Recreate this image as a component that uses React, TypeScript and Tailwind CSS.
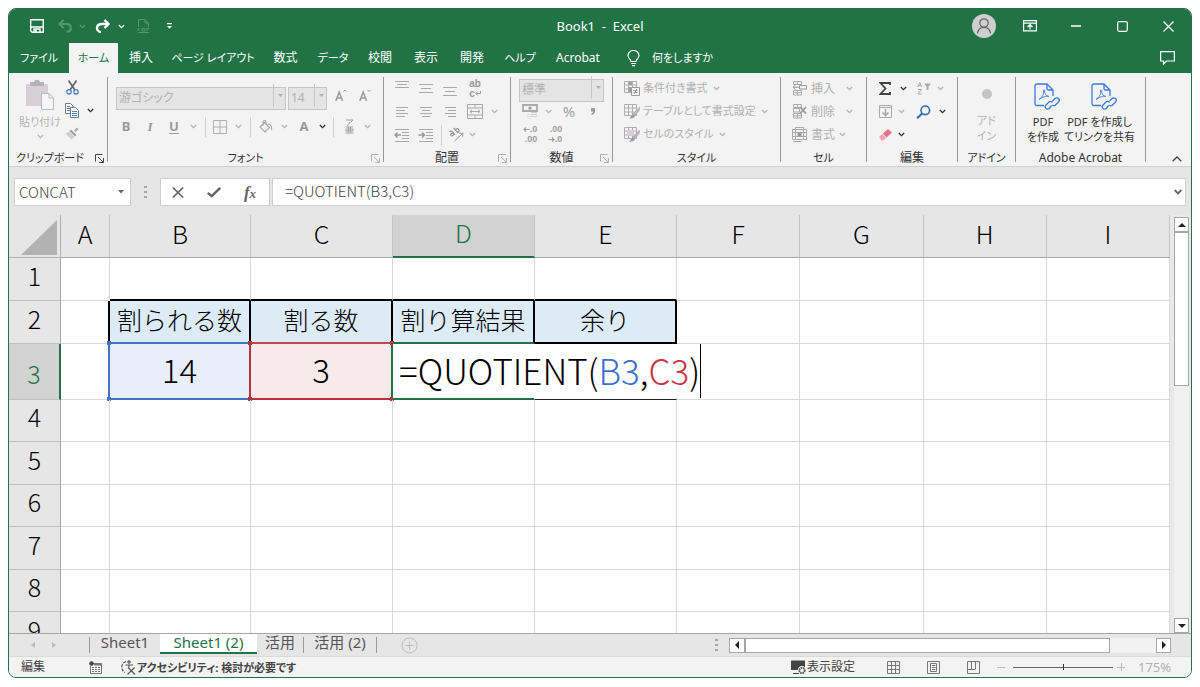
import React from 'react';

const UI = "font-['Noto_Sans','Noto_Sans_CJK_JP',sans-serif] [font-feature-settings:'palt']";
const CELL = "font-['Noto_Sans_CJK_JP',sans-serif] [font-feature-settings:normal]";

/* ---------- small shared pieces ---------- */

function Chevron({ className = 'text-[#b4b4b4]' }: { className?: string }) {
    return (
        <svg width="7" height="5" viewBox="0 0 7 5" className={`${className} shrink-0`} fill="none" stroke="currentColor" strokeWidth="1.3">
            <path d="M0.8 1 L3.5 3.7 L6.2 1" />
        </svg>
    );
}

function Drop({ width = 'w-4', dark = false, label }: { width?: string; dark?: boolean; label: string }) {
    return (
        <button aria-label={label} className={`${width} h-5 flex items-center justify-center shrink-0`}>
            <Chevron className={dark ? 'text-[#333]' : 'text-[#b4b4b4]'} />
        </button>
    );
}

function Tool({ width = 'w-6', label, className = '', children }: { width?: string; label: string; className?: string; children: React.ReactNode }) {
    return (
        <button aria-label={label} className={`${width} h-[23px] flex items-center justify-center shrink-0 ${className}`}>
            {children}
        </button>
    );
}

/* Horizontal strokes for the alignment icons: [x1, x2, y] */
function Lines({ rows, children }: { rows: number[][]; children?: React.ReactNode }) {
    return (
        <svg width="18" height="22" viewBox="0 0 18 22" stroke="#a8a8a8" fill="none">
            {rows.map(([x1, x2, y], i) => (
                <path key={i} d={`M${x1} ${y}.5 H${x2}`} />
            ))}
            {children}
        </svg>
    );
}

function Launcher({ dark = false }: { dark?: boolean }) {
    return (
        <button aria-label="詳細" className={`absolute right-[3px] top-[4px] ${dark ? 'text-[#444]' : 'text-[#b0b0b0]'}`}>
            <svg width="9" height="9" viewBox="0 0 9 9" fill="none" stroke="currentColor">
                <path d="M0.5 7.5 V0.5 H7.5 M3 3 L8 8 M8.5 4 V8.5 H4" />
            </svg>
        </button>
    );
}

type GroupProps = { label: string; width: string; size?: string; launcher?: 'dark' | 'light'; children: React.ReactNode };

function Group({ label, width, size = 'text-xs', launcher, children }: GroupProps) {
    return (
        <section aria-label={label} className={`${width} relative flex shrink-0`}>
            <div className="flex-1 min-w-0 flex flex-col">
                <div className="flex-1">{children}</div>
                <div className={`relative h-4 text-center ${size} leading-4 text-[#333] whitespace-nowrap`}>
                    <span className={launcher === 'dark' ? 'pr-4' : ''}>{label}</span>
                    {launcher && <Launcher dark={launcher === 'dark'} />}
                </div>
            </div>
            <div className="w-px my-1 bg-[#979797]" />
        </section>
    );
}

function Sep() {
    return <div className="w-px h-5 bg-[#d0d0d0] shrink-0" />;
}

function RibbonSelect({ label, value, width }: { label: string; value: string; width: string }) {
    return (
        <div className={`${width} relative h-[23px] text-[#b0b0b0]`}>
            <select aria-label={label} className="appearance-none w-full h-full bg-[#e4e4e4] border border-[#c6c6c6] pl-[2px] text-xs leading-5 outline-none">
                <option>{value}</option>
            </select>
            <span className="pointer-events-none absolute right-0 inset-y-0 w-[13px] border-l border-[#c6c6c6] flex items-center justify-center">
                <svg width="5" height="3" viewBox="0 0 5 3"><path d="M0 0 H5 L2.5 3 Z" fill="#b0b0b0" /></svg>
            </span>
        </div>
    );
}

/* ---------- title bar ---------- */

function TitleBar() {
    return (
        <header className="h-[34px] shrink-0 relative flex items-center justify-between text-white">
            <div className="flex items-center pl-[18px]">
                <Tool label="上書き保存" width="w-5">
                    <svg width="14" height="14" viewBox="0 0 14 14" fill="none" stroke="currentColor" strokeWidth="1.4">
                        <path d="M0.7 0.7 H13.3 V13.3 H2.2 L0.7 12 Z" />
                        <path d="M1 8 H13" strokeWidth="1.4" />
                        <path d="M4 13 V10 H10 V13" />
                        <path d="M5.8 10.5 V13" strokeWidth="2" />
                    </svg>
                </Tool>
                <Tool label="元に戻す" width="w-7" className="ml-1 text-[#569772]">
                    <svg width="14" height="14" viewBox="0 0 14 14" fill="none" stroke="currentColor" strokeWidth="2">
                        <path d="M5.5 1 L1.5 5 L5.5 9" />
                        <path d="M2 5 H8.5 C14 5 14.5 12.5 8.5 12.8" />
                    </svg>
                </Tool>
                <Chevron className="text-[#569772]" />
                <Tool label="やり直し" width="w-8">
                    <svg width="15" height="14" viewBox="0 0 15 14" fill="none" stroke="currentColor" strokeWidth="2.4">
                        <path d="M9.5 1 L13.5 5 L9.5 9" />
                        <path d="M13 5 H7 C0.5 5 0.5 12.5 6 13" />
                    </svg>
                </Tool>
                <Chevron className="text-white" />
                <Tool label="PDF" width="w-9" className="text-[#569772]">
                    <svg width="13" height="15" viewBox="0 0 13 15" fill="none" stroke="currentColor">
                        <path d="M1.5 8 V0.5 H8 L11.5 4 V8 M8 0.5 V4 H11.5" />
                        <path d="M1.5 14 V13.5 H11.5 V14" />
                        <path d="M1 9.5 V12 M1 10 H3 M5 9.5 H8 V12 H5 Z M10 9.5 H12.5 M10 9.5 V12" />
                    </svg>
                </Tool>
                <Tool label="カスタマイズ" width="w-4">
                    <svg width="5" height="6" viewBox="0 0 5 6" fill="currentColor">
                        <path d="M0 0 H5 V1.2 H0 Z M0 3 H5 L2.5 5.8 Z" />
                    </svg>
                </Tool>
            </div>
            <h1 className="absolute inset-x-0 text-center text-[13px] leading-5 pointer-events-none whitespace-pre">Book1  -  Excel</h1>
            <div className="flex items-center">
                <button aria-label="アカウント" className="size-6 rounded-full bg-[#cfcfcf] flex items-center justify-center mr-[22px]">
                    <svg width="16" height="18" viewBox="0 0 16 18" fill="none" stroke="#666" strokeWidth="1.2">
                        <circle cx="8" cy="6" r="4.2" />
                        <path d="M1.5 16.5 C2 12 5 10.3 8 10.3 C11 10.3 14 12 14.5 16.5" />
                    </svg>
                </button>
                <Tool label="リボンの表示オプション" className="mr-[22px]">
                    <svg width="14" height="12" viewBox="0 0 14 12" fill="none" stroke="currentColor" strokeWidth="1.2">
                        <path d="M0.6 0.6 H13.4 V10.9 H0.6 Z M0.6 3.2 H13.4 M7 9.5 V5 M4.5 7 L7 4.6 L9.5 7" />
                    </svg>
                </Tool>
                <Tool label="最小化" className="mr-[22px]">
                    <svg width="10" height="2" viewBox="0 0 10 2"><path d="M0 1 H10" stroke="currentColor" strokeWidth="1.3" /></svg>
                </Tool>
                <Tool label="最大化" className="mr-[22px]">
                    <svg width="11" height="11" viewBox="0 0 11 11" fill="none" stroke="currentColor" strokeWidth="1.2"><rect x="0.7" y="0.7" width="9.6" height="9.6" rx="1.5" /></svg>
                </Tool>
                <Tool label="閉じる" className="mr-[11px]">
                    <svg width="11" height="11" viewBox="0 0 11 11" stroke="currentColor" strokeWidth="1.3"><path d="M0.5 0.5 L10.5 10.5 M10.5 0.5 L0.5 10.5" /></svg>
                </Tool>
            </div>
        </header>
    );
}

const TABS: [string, string][] = [
    ['ファイル', 'w-[60px] text-[11px]'],
    ['ホーム', 'w-[49px] text-[11px] bg-[#f3f3f3] text-[#217346]'],
    ['挿入', 'w-[46px]'],
    ['ページ レイアウト', 'w-[98px] text-[11px]'],
    ['数式', 'w-[47px]'],
    ['データ', 'w-[48px] text-[11px]'],
    ['校閲', 'w-[46px]'],
    ['表示', 'w-[46px]'],
    ['開発', 'w-[46px]'],
    ['ヘルプ', 'w-[50px] text-[11px]'],
    ['Acrobat', 'w-[66px]'],
];

function RibbonTabs() {
    return (
        <nav className="h-[30px] shrink-0 flex text-xs text-white">
            {TABS.map(([name, cls]) => (
                <button key={name} className={`${cls} h-full shrink-0 flex items-center justify-center whitespace-nowrap`}>{name}</button>
            ))}
            <button className="flex items-center gap-3 pl-4 text-[11px] whitespace-nowrap">
                <svg width="13" height="17" viewBox="0 0 13 17" fill="none" stroke="currentColor" strokeWidth="1.2">
                    <path d="M4 11.5 C4 9 1 8.5 1 5.5 A5.5 5 0 0 1 12 5.5 C12 8.5 9 9 9 11.5 Z M4.2 13.5 H8.8 M5 15.7 H8" />
                </svg>
                何をしますか
            </button>
            <button aria-label="コメント" className="ml-auto mr-4">
                <svg width="15" height="14" viewBox="0 0 15 14" fill="none" stroke="currentColor" strokeWidth="1.2">
                    <path d="M0.6 0.6 H14.4 V10 H6.5 L3.5 13 V10 H0.6 Z" />
                </svg>
            </button>
        </nav>
    );
}

/* ---------- ribbon groups ---------- */

function Clipboard() {
    return (
        <Group label="クリップボード" width="w-[99px]" size="text-[11px]" launcher="dark">
            <div className="flex pt-[3px] pl-[9px]">
                <button className="w-11 pt-[3px] flex flex-col items-center text-[11px] leading-4 text-[#b4b4b4] whitespace-nowrap">
                    <svg width="28" height="32" viewBox="0 0 28 32" className="mb-[3px]">
                        <path d="M0 5 H22 V27 H0 Z" fill="#d6d0d6" />
                        <path d="M4 3 H8 C8 0 14 0 14 3 H18 V7 H4 Z" fill="#b5b3b5" />
                        <path d="M15.5 14.5 H23 L27.5 19 V30.5 H15.5 Z" fill="#f6f6f6" stroke="#bdb8bd" />
                        <path d="M23 14.5 V19 H27.5" fill="none" stroke="#bdb8bd" />
                    </svg>
                    貼り付け
                    <span className="pt-1"><Chevron /></span>
                </button>
                <div className="flex flex-col">
                    <Tool label="切り取り" width="w-5">
                        <svg width="13" height="15" viewBox="0 0 13 15" fill="none">
                            <path d="M2.5 0.5 L9 10 M10.5 0.5 L4 10" stroke="#666" strokeWidth="1.7" />
                            <circle cx="3" cy="11.8" r="2.2" stroke="#4f81bd" strokeWidth="1.3" />
                            <circle cx="10" cy="11.8" r="2.2" stroke="#4f81bd" strokeWidth="1.3" />
                        </svg>
                    </Tool>
                    <div className="flex items-center">
                        <Tool label="コピー" width="w-5">
                            <svg width="14" height="15" viewBox="0 0 14 15" fill="#f8f8f8" stroke="#6b7a8c">
                                <path d="M0.5 0.5 H5.5 L8 3 V10.5 H0.5 Z M2 3.5 H5 M2 5.5 H5 M2 7.5 H5" />
                                <path d="M5.5 4.5 H10.5 L13.5 7.5 V14.5 H5.5 Z" />
                                <path d="M7 8.5 H12 M7 10.5 H12 M7 12.5 H12" stroke="#4f81bd" />
                            </svg>
                        </Tool>
                        <Drop label="コピーのオプション" dark />
                    </div>
                    <Tool label="書式のコピー" width="w-5">
                        <svg width="14" height="13" viewBox="0 0 14 13">
                            <path d="M9 3.5 L12 0.5 L13.5 2 L10.5 5 Z" fill="#aaa" />
                            <path d="M6 2.5 L11.5 8 L10 9.5 L4.5 4 Z" fill="#a0a0a0" />
                            <path d="M4 4.5 L9.5 10 L6.5 12.5 L0.5 6.5 Z" fill="#cfcfcf" />
                        </svg>
                    </Tool>
                </div>
            </div>
        </Group>
    );
}

function FontGroup() {
    return (
        <Group label="フォント" width="w-[276px]" size="text-[11px]" launcher="light">
            <div className="flex items-center pl-2 pt-[11px] text-[#999]">
                <RibbonSelect label="フォント名" value="游ゴシック" width="w-[170px]" />
                <div className="w-[2px]" />
                <RibbonSelect label="フォント サイズ" value="14" width="w-[39px]" />
                <Tool label="フォント サイズの拡大" className="ml-[2px]">
                    <svg width="12" height="14" viewBox="0 0 12 14" fill="none" stroke="currentColor" strokeWidth="1.5"><path d="M0.8 12 L4.2 3 L7.6 12 M2 9 H6.5" /><path d="M8.5 2.6 L10 1 L11.5 2.6" strokeWidth="1" /></svg>
                </Tool>
                <Tool label="フォント サイズの縮小">
                    <svg width="12" height="14" viewBox="0 0 12 14" fill="none" stroke="currentColor" strokeWidth="1.5"><path d="M0.8 12 L4.2 3 L7.6 12 M2 9 H6.5" /><path d="M8.5 1 L10 2.6 L11.5 1" strokeWidth="1" /></svg>
                </Tool>
            </div>
            <div className="flex items-center pl-[6px] pt-2 text-[#9a9a9a] text-[13px]">
                <Tool label="太字" className="font-bold">B</Tool>
                <Tool label="斜体" className="font-bold italic font-['Liberation_Serif',serif]">I</Tool>
                <Tool label="下線" className="font-bold underline underline-offset-2">U</Tool>
                <Drop width="w-[14px]" label="下線の種類" />
                <div className="px-[5px]"><Sep /></div>
                <Tool label="罫線" width="w-[18px]">
                    <svg width="14" height="14" viewBox="0 0 14 14" fill="none" stroke="#b0b0b0"><path d="M0.5 0.5 H13.5 V13.5 H0.5 Z M7 0.5 V13.5 M0.5 7 H13.5" /></svg>
                </Tool>
                <Drop width="w-[18px]" label="罫線の種類" />
                <div className="px-[3px]"><Sep /></div>
                <Tool label="塗りつぶしの色">
                    <svg width="14" height="13" viewBox="0 0 14 13" fill="none" stroke="#a8a8a8" strokeWidth="1.1"><path d="M5.5 2.5 L10.5 7.5 L6 12 L1 7 Z M4 6 V2 A1.5 1.5 0 0 1 7 2 V5 M9 4 C12 4.5 13 7 12.5 10" /></svg>
                </Tool>
                <Drop width="w-3" label="塗りつぶしの色の選択" />
                <div className="w-[2px]" />
                <Tool label="フォントの色" className="font-bold">A</Tool>
                <Drop width="w-3" dark label="フォントの色の選択" />
                <div className="px-[5px]"><Sep /></div>
                <Tool label="ふりがな" width="w-5">
                    <svg width="9" height="15" viewBox="0 0 9 15" fill="none" stroke="#a0a0a0"><path d="M1 1 H8 L5.5 3.5 M4.5 3 C4.5 5 3.5 6 2 6.5 M1 8 H8 M3.5 8 V13.5 M5.5 8 V13.5 M1 10 V12 H8 V10 H1 M0.5 14 H8.5" /></svg>
                </Tool>
                <Drop label="ふりがなの設定" />
            </div>
        </Group>
    );
}

function Alignment() {
    return (
        <Group label="配置" width="w-[127px]" launcher="light">
            <div className="pt-1 pl-[6px]">
                <div className="flex items-center h-[23px]">
                    <Tool label="上揃え"><Lines rows={[[2, 16, 3], [4, 14, 6], [2, 16, 9]]} /></Tool>
                    <Tool label="上下中央揃え"><Lines rows={[[2, 16, 6], [4, 14, 10], [2, 16, 14]]} /></Tool>
                    <Tool label="下揃え"><Lines rows={[[2, 16, 9], [4, 14, 13], [2, 16, 17]]} /></Tool>
                    <Tool label="折り返して全体を表示する" width="w-[26px]" className="text-[#9a9a9a]">
                        <span className="text-[10px] leading-[10px] font-bold text-left font-['Liberation_Sans',sans-serif]">
                            <span className="block h-[10px]">ab</span>
                            <span className="flex items-center h-[10px]">
                                c
                                <svg width="6" height="5" viewBox="0 0 6 5" fill="none" stroke="currentColor"><path d="M5.5 0 V2.5 H1 M2.5 0.7 L0.8 2.5 L2.5 4.3" /></svg>
                            </span>
                        </span>
                    </Tool>
                </div>
                <div className="flex items-center h-[23px]">
                    <Tool label="左揃え"><Lines rows={[[3, 15, 6], [3, 12, 9], [3, 15, 12], [3, 12, 15]]} /></Tool>
                    <Tool label="中央揃え"><Lines rows={[[3, 15, 6], [5, 13, 9], [3, 15, 12], [5, 13, 15]]} /></Tool>
                    <Tool label="右揃え"><Lines rows={[[4, 15, 6], [7, 15, 9], [4, 15, 12], [7, 15, 15]]} /></Tool>
                    <Tool label="セルを結合して中央揃え" width="w-[26px]">
                        <svg width="16" height="15" viewBox="0 0 16 15" fill="none" stroke="#a8a8a8"><path d="M0.5 0.5 H15.5 V14.5 H0.5 Z M0.5 4 H15.5 M0.5 11 H15.5 M8 0.5 V4 M8 11 V14.5 M3 7.5 H13 M5 5.7 L3 7.5 L5 9.3 M11 5.7 L13 7.5 L11 9.3" /></svg>
                    </Tool>
                    <Drop width="w-3" label="結合の種類" />
                </div>
                <div className="flex items-center h-[23px]">
                    <Tool label="インデントを減らす">
                        <Lines rows={[[2, 16, 5], [9, 16, 8], [9, 16, 11], [9, 16, 14], [2, 16, 17]]}><path d="M2 11 H8 M4.5 8.5 L2 11 L4.5 13.5" strokeWidth="1.5" stroke="#999" /></Lines>
                    </Tool>
                    <Tool label="インデントを増やす">
                        <Lines rows={[[2, 16, 5], [9, 16, 8], [9, 16, 11], [9, 16, 14], [2, 16, 17]]}><path d="M1.5 11 H7.5 M5 8.5 L7.5 11 L5 13.5" strokeWidth="1.5" stroke="#999" /></Lines>
                    </Tool>
                    <div className="pl-[3px]"><Sep /></div>
                    <Tool label="方向" width="w-[28px]" className="text-[#999]">
                        <svg width="16" height="15" viewBox="0 0 16 15" fill="none" stroke="currentColor">
                            <path d="M1.5 5.2 C2.5 3.8 3.8 4 4.6 5 L7 7.8 M5.2 5.8 C3.8 5.8 2 7 2.8 8.4 C3.8 9.8 6 8 5.8 6.6" strokeWidth="1.2" />
                            <path d="M5.5 0.8 L10 6 M7.6 3.2 C8 1.4 10 1.2 10.8 2.6 C11.6 4 10.8 5.6 9.4 5.4" strokeWidth="1.2" />
                            <path d="M6.5 14 L14.5 6.5 M11.2 6.2 H14.8 V9.8" />
                        </svg>
                    </Tool>
                    <Drop width="w-1" label="方向の設定" />
                </div>
            </div>
        </Group>
    );
}

function NumberGroup() {
    return (
        <Group label="数値" width="w-[102px]" launcher="light">
            <div className="pt-[3px] pl-2">
                <RibbonSelect label="表示形式" value="標準" width="w-[85px]" />
                <div className="flex items-center h-6 text-[#a0a0a0]">
                    <Tool label="通貨表示形式" width="w-[22px]">
                        <svg width="16" height="15" viewBox="0 0 16 15" fill="none"><path d="M1 1 H15 V7 H1 Z" stroke="#aaa" strokeWidth="1.8" /><circle cx="8" cy="4" r="1.6" fill="#999" /><path d="M9 8.5 H15 M9 10.5 H15 M9 12.5 H15" stroke="#ccc" /><path d="M5 10.5 H9 M5 12.5 H9 M5 14.5 H9" stroke="#ddd" /></svg>
                    </Tool>
                    <Drop width="w-[14px]" label="通貨の選択" />
                    <Tool label="パーセント スタイル" width="w-[28px]" className="text-[15px]">%</Tool>
                    <Tool label="桁区切りスタイル" width="w-5">
                        <svg width="4" height="7" viewBox="0 0 4 7"><path d="M0 0 H4 V3 C4 5.5 2.5 6.5 0.5 7 V5.5 C1.5 5.2 2 4.5 2 3.6 H0 Z" fill="#999" /></svg>
                    </Tool>
                </div>
                <div className="flex items-center h-[22px] text-[9px] leading-[10px] font-bold text-[#a0a0a0] font-['Liberation_Sans',sans-serif]">
                    <Tool label="小数点以下の表示桁数を増やす" width="w-[22px]">
                        <span>
                            <span className="flex items-center justify-end h-[10px]">
                                <svg width="7" height="5" viewBox="0 0 7 5" fill="none" stroke="currentColor" strokeWidth="1.2"><path d="M6.5 2.5 H1 M3 0.5 L1 2.5 L3 4.5" /></svg>.0
                            </span>
                            <span className="block text-right h-[10px]">.00</span>
                        </span>
                    </Tool>
                    <Tool label="小数点以下の表示桁数を減らす" width="w-[28px]">
                        <span>
                            <span className="block text-right h-[10px]">.00</span>
                            <span className="flex items-center justify-end h-[10px]">
                                <svg width="7" height="5" viewBox="0 0 7 5" fill="none" stroke="currentColor" strokeWidth="1.2"><path d="M0.5 2.5 H6 M4 0.5 L6 2.5 L4 4.5" /></svg>.0
                            </span>
                        </span>
                    </Tool>
                </div>
            </div>
        </Group>
    );
}

function StyleIcon({ kind }: { kind: number }) {
    return (
        <svg width="16" height="15" viewBox="0 0 16 15" fill="none" stroke="#aeaeae">
            <path d="M0.5 0.5 H12.5 V11.5 H0.5 Z M4.5 0.5 V11.5 M8.5 0.5 V11.5 M0.5 4 H12.5 M0.5 8 H12.5" />
            {kind === 0 && <path d="M4.5 1 H8 V4 H4.5 Z M4.5 6 H7 V11 H4.5 Z" fill="#a0a0a0" stroke="none" />}
            {kind === 0 && <path d="M7.5 6.5 H15.5 V14.5 H7.5 Z M9.5 9.5 H13.5 M9.5 11.5 H13.5 M13 8 L10 13" fill="#f3f3f3" stroke="#9a9a9a" />}
            {kind === 2 && <path d="M3 3 H10 V9 H3 Z" fill="#d9ccd6" stroke="none" />}
            {kind > 0 && <path d="M15.5 3 L9 10 L11 12 L15.5 6 Z" fill="#b8b8b8" stroke="#a5a5a5" strokeWidth="0.5" />}
            {kind > 0 && <path d="M9 10 L11 12 C10 14.5 7.5 14.5 5 14.5 C7 13.5 7 11 9 10 Z" fill="#9c9c9c" stroke="none" />}
        </svg>
    );
}

function Styles() {
    return (
        <Group label="スタイル" width="w-[168px]" size="text-[11px]">
            <div className="pt-1 pl-[11px] text-[11px] text-[#b0b0b0]">
                {['条件付き書式', 'テーブルとして書式設定', 'セルのスタイル'].map((name, i) => (
                    <button key={name} className="flex items-center gap-[3px] h-[23px] whitespace-nowrap">
                        <StyleIcon kind={i} />
                        {name}
                        <span className="pl-[2px]"><Chevron /></span>
                    </button>
                ))}
            </div>
        </Group>
    );
}

function CellIcon({ kind }: { kind: number }) {
    return (
        <svg width="15" height="15" viewBox="0 0 15 15" fill="none" stroke="#aaa">
            {kind < 2 && <path d="M1.5 0.5 H9.5 V3.5 H1.5 Z M5.5 0.5 V3.5 M1.5 9.5 H9.5 V14 H1.5 Z M5.5 9.5 V14 M1.5 11.7 H9.5" />}
            {kind === 0 && <path d="M7.5 4.5 H14.5 V8 H7.5 Z M1 6.3 H8 M3.5 4 L1 6.3 L3.5 8.6" stroke="#999" />}
            {kind === 1 && <path d="M1.5 4.5 H7.5 V8 H1.5 Z" />}
            {kind === 1 && <path d="M8 3 L14 9.5 M14 3 L8 9.5" stroke="#999" strokeWidth="1.8" />}
            {kind === 2 && <path d="M0.5 2.5 H14.5 V12.5 H0.5 Z M3.5 2.5 V12.5 M11.5 2.5 V12.5 M0.5 5.5 H14.5 M0.5 9.5 H14.5 M3.5 0 V2 M11.5 0 V2 M3.5 0.5 H11.5 M1 14.5 H9" />}
            {kind === 2 && <path d="M5.5 5.5 H9.5 V9.5 H5.5 Z" fill="#999" stroke="none" />}
        </svg>
    );
}

function Cells() {
    return (
        <Group label="セル" width="w-[86px]" size="text-[11px]">
            <div className="pt-1 pl-[11px] text-xs text-[#b0b0b0]">
                {['挿入', '削除', '書式'].map((name, i) => (
                    <button key={name} className="flex items-center gap-1 h-[23px]">
                        <CellIcon kind={i} />
                        {name}
                        <span className={i < 2 ? 'pl-[7px]' : ''}><Chevron /></span>
                    </button>
                ))}
            </div>
        </Group>
    );
}

function Editing() {
    return (
        <Group label="編集" width="w-[91px]">
            <div className="pt-1 pl-2">
                <div className="flex items-center h-[23px]">
                    <Tool label="オート SUM" width="w-5">
                        <svg width="12" height="13" viewBox="0 0 12 13" fill="none" stroke="#444" strokeWidth="1.8"><path d="M11 3 V1 H1.5 L6.5 6.5 L1.5 12 H11 V10" /></svg>
                    </Tool>
                    <Drop dark label="集計方法" />
                    <Tool label="並べ替えとフィルター" width="w-[25px]">
                        <svg width="14" height="13" viewBox="0 0 14 13" fill="none" stroke="#aaa"><path d="M0.8 5 L2.8 0.5 L4.8 5 M1.5 3.5 H4 M1 7.5 H4.5 L1 12 H4.8" /><path d="M7 1.5 H14 L11.5 4.5 V8 H9.5 V4.5 Z" fill="#aaa" stroke="none" /></svg>
                    </Tool>
                    <Drop width="w-2" label="並べ替えの選択" />
                </div>
                <div className="flex items-center h-[23px]">
                    <Tool label="フィル" width="w-5">
                        <svg width="13" height="13" viewBox="0 0 13 13" fill="none" stroke="#aaa"><path d="M0.5 0.5 H12.5 V12.5 H0.5 Z M0.5 2.5 H12.5" /><path d="M6.5 4 V10.5 M3.5 7.5 L6.5 10.5 L9.5 7.5" strokeWidth="1.6" /></svg>
                    </Tool>
                    <Drop width="w-3" label="フィルの選択" />
                    <Tool label="検索と選択" width="w-[33px]">
                        <svg width="15" height="14" viewBox="0 0 15 14" fill="none" stroke="#2f6eb5" strokeWidth="1.6"><circle cx="9.3" cy="5.3" r="4.3" /><path d="M6.2 8.4 L1 13.3" strokeWidth="2" /></svg>
                    </Tool>
                    <Drop width="w-1" dark label="検索の選択" />
                </div>
                <div className="flex items-center h-[23px]">
                    <Tool label="クリア" width="w-5">
                        <svg width="13" height="12" viewBox="0 0 13 12"><path d="M4 4.5 L9 0 L13 3.5 L7.5 8.5 Z" fill="#e8748c" /><path d="M3.5 5 L7 8.8 L4.5 11.5 H2.5 L0 8 Z" fill="#f0a5b3" /></svg>
                    </Tool>
                    <Drop width="w-3" dark label="クリアの選択" />
                </div>
            </div>
        </Group>
    );
}

function PdfIcon() {
    return (
        <svg width="26" height="28" viewBox="0 0 26 28" className="ml-2" fill="none" stroke="#3a78e0" strokeWidth="1.3">
            <path d="M10 22.5 H3 Q1 22.5 1 20.5 V3 Q1 1 3 1 H13 L19 7 V13 M13 1 V5.5 Q13 7 14.5 7 H19" />
            <path d="M5 16.5 C8.5 14 10 11 9.5 8 C9 6.5 11 6.5 10.7 8 C10.5 11.5 12.5 13 15 13.5 C13 12.5 8 14 5 16.5 Z" strokeWidth="0.9" />
            <path d="M18.5 18 L21 15.5 A2.3 2.3 0 0 1 24.5 19 L21.5 22 A2.3 2.3 0 0 1 18 21.8 M17.5 22.5 L15.3 25.5 A2.3 2.3 0 0 1 12 22 L15 19 A2.3 2.3 0 0 1 18.5 19.4" />
        </svg>
    );
}

function Ribbon() {
    return (
        <div className="h-[94px] shrink-0 flex bg-[#f3f3f3] border-b border-[#d0d0d0]">
            <Clipboard />
            <FontGroup />
            <Alignment />
            <NumberGroup />
            <Styles />
            <Cells />
            <Editing />
            <Group label="アドイン" width="w-[58px]" size="text-[11px]">
                <button className="w-full pt-4 flex flex-col items-center text-[11px] leading-[15px] text-[#b4b4b4]">
                    <span className="size-[10px] rounded-full bg-[#c4c4c4] mb-[14px]" />
                    アド<br />イン
                </button>
            </Group>
            <Group label="Adobe Acrobat" width="w-[130px]">
                <div className="flex pt-[10px] pr-4 text-[11px] leading-[15px] text-[#333] whitespace-nowrap">
                    <button className="w-[54px] flex flex-col items-center gap-[3px]">
                        <PdfIcon />
                        <span>PDF<br />を作成</span>
                    </button>
                    <button className="flex-1 min-w-0 flex flex-col items-center gap-[3px]">
                        <PdfIcon />
                        <span>PDF を作成し<br />てリンクを共有</span>
                    </button>
                </div>
            </Group>
            <button aria-label="リボンを折りたたむ" className="ml-auto mr-[9px] mb-1 self-end">
                <svg width="10" height="6" viewBox="0 0 10 6" fill="none" stroke="#444" strokeWidth="1.3"><path d="M0.7 5.3 L5 1 L9.3 5.3" /></svg>
            </button>
        </div>
    );
}

/* ---------- formula bar ---------- */

function Grip() {
    return (
        <svg width="3" height="12" viewBox="0 0 3 12" fill="#a8a8a8"><path d="M0 0 H3 V2 H0 Z M0 5 H3 V7 H0 Z M0 10 H3 V12 H0 Z" /></svg>
    );
}

function FormulaBar() {
    return (
        <div className={`${CELL} h-[48px] shrink-0 flex pt-[11px] pb-[9px] pl-[5px] pr-[5px] text-[15px] text-[#444]`}>
            <div className="w-[117px] flex items-center bg-white border border-[#cfcfcf]">
                <input aria-label="名前ボックス" defaultValue="CONCAT" className="flex-1 min-w-0 h-full pl-1 pb-[2px] bg-transparent outline-none font-light" />
                <button aria-label="名前の一覧" className="px-[6px]">
                    <svg width="6" height="4" viewBox="0 0 6 4"><path d="M0 0 H6 L3 3.6 Z" fill="#666" /></svg>
                </button>
            </div>
            <div className="w-[29px] flex items-center justify-center">
                <Grip />
            </div>
            <div className="w-[110px] flex items-center bg-white border border-[#cfcfcf]">
                <button aria-label="キャンセル" className="w-[34px] flex justify-center">
                    <svg width="12" height="11" viewBox="0 0 12 11" stroke="#666" strokeWidth="1.7"><path d="M0.8 0.5 L11.2 10.5 M11.2 0.5 L0.8 10.5" /></svg>
                </button>
                <button aria-label="入力" className="w-[38px] flex justify-center">
                    <svg width="14" height="11" viewBox="0 0 14 11" fill="none" stroke="#666" strokeWidth="2.4"><path d="M0.8 5.8 L4.8 9.2 L13.2 0.8" /></svg>
                </button>
                <button aria-label="関数の挿入" className="w-[34px] text-center font-bold italic text-[17px] leading-none text-[#666] font-['Liberation_Serif',serif]">f<span className="text-[13px]">x</span></button>
            </div>
            <div className="ml-[2px] flex-1 flex items-center bg-white border border-[#d0d0d0]">
                <input aria-label="数式バー" defaultValue="=QUOTIENT(B3,C3)" className="flex-1 min-w-0 h-full pl-3 pb-1 bg-transparent outline-none font-light" />
                <button aria-label="数式バーの展開" className="px-[3px]">
                    <svg width="8" height="6" viewBox="0 0 8 6" fill="none" stroke="#666" strokeWidth="1.8"><path d="M0.7 1 L4 4.4 L7.3 1" /></svg>
                </button>
            </div>
        </div>
    );
}

/* ---------- worksheet ---------- */

const COLS = ['A', 'B', 'C', 'D', 'E', 'F', 'G', 'H', 'I'];
const COL_WIDTHS = ['w-[49px]', 'w-[141px]', 'w-[142px]', 'w-[142px]', 'w-[142px]', '', '', '', ''];
const ROWS = [
    { n: 1, h: 'h-[43px]' },
    { n: 2, h: 'h-[43px]' },
    { n: 3, h: 'h-[56px]' },
    { n: 4, h: 'h-[42px]' },
    { n: 5, h: 'h-[43px]' },
    { n: 6, h: 'h-[42px]' },
    { n: 7, h: 'h-[43px]' },
    { n: 8, h: 'h-[42px]' },
    { n: 9, h: 'h-[43px]' },
];

const HEAD = 'bg-[#ddebf7] text-[25px]';
const TEXTS: Record<string, string> = { B2: '割られる数', C2: '割る数', D2: '割り算結果', E2: '余り', B3: '14', C3: '3' };

/* Cells whose fill or edges differ from the plain grid line */
const CELL_STYLES: Record<string, string> = {
    B1: 'border-r border-r-[#d9d9d9] border-b-2 border-b-black',
    C1: 'border-r border-r-[#d9d9d9] border-b-2 border-b-black',
    D1: 'border-r border-r-[#d9d9d9] border-b-2 border-b-black',
    E1: 'border-r border-r-[#d9d9d9] border-b-2 border-b-black',
    A2: 'border-r-2 border-r-black border-b border-b-[#d9d9d9]',
    B2: `${HEAD} border-r-2 border-r-black border-b-2 border-b-[#4472c4]`,
    C2: `${HEAD} border-r-2 border-r-black border-b-2 border-b-[#c0464f]`,
    D2: `${HEAD} border-r-2 border-r-black border-b-2 border-b-[#217346]`,
    E2: `${HEAD} border-r-2 border-r-black border-b-2 border-b-black`,
    A3: 'border-r-2 border-r-[#4472c4] border-b border-b-[#d9d9d9]',
    B3: 'bg-[#e9effa] text-[33px] border-r-2 border-r-[#b8323c] border-b-2 border-b-[#4472c4]',
    C3: 'bg-[#f8eaeb] text-[33px] border-r-2 border-r-[#217346] border-b-2 border-b-[#b8323c]',
    D3: 'border-r border-r-white border-b-2 border-b-[#217346]',
    E3: 'border-r border-r-[#d9d9d9] border-b border-b-[#222]',
};

function Handles({ color }: { color: string }) {
    return (
        <>
            <i className={`absolute size-1 -top-[3px] -left-[3px] ${color}`} />
            <i className={`absolute size-1 -bottom-[3px] -left-[3px] ${color}`} />
            <i className={`absolute size-1 -top-[3px] -right-[3px] ${color}`} />
            <i className={`absolute size-1 -bottom-[3px] -right-[3px] ${color}`} />
        </>
    );
}

/* In-cell editor, spills over the neighbouring cells */
function CellEditor() {
    return (
        <div className="absolute left-0 top-0 z-10 h-[54px] pl-[6px] pb-1 bg-white border-r border-black flex items-center text-[35px] leading-none whitespace-nowrap">
            =QUOTIENT(<span className="text-[#3a6fd0]">B3</span>,<span className="text-[#c8353f]">C3</span>)
        </div>
    );
}

function Sheet() {
    return (
        <div className="flex-1 min-h-0 flex overflow-hidden">
            <div className="flex-1 min-w-0 overflow-hidden">
                <table className={`${CELL} table-fixed w-full border-separate border-spacing-0 font-light text-black leading-none text-center`}>
                    <thead className="text-[25px]">
                        <tr className="h-[43px] bg-[#e6e6e6]">
                            <th aria-label="すべて選択" className="w-[52px] border-r border-b border-[#b0b0b0] p-0 align-bottom">
                                <svg width="37" height="36" viewBox="0 0 37 36" className="ml-auto mr-[2px] mb-[2px]"><path d="M0 36 L36 1 V36 Z" fill="#b2b2b2" /></svg>
                            </th>
                            {COLS.map((c, i) => (
                                <th key={c} className={`${COL_WIDTHS[i]} p-0 pb-[6px] font-light border-r border-r-[#c4c4c4] ${c === 'D' ? 'bg-[#d2d2d2] text-[#217346] border-b-2 border-b-[#217346]' : 'border-b border-b-[#a6a6a6]'}`}>{c}</th>
                            ))}
                        </tr>
                    </thead>
                    <tbody>
                        {ROWS.map((row) => (
                            <tr key={row.n} className={row.h}>
                                <th className={`p-0 font-light text-[25px] border-b border-b-[#c0c0c0] ${row.n === 3 ? 'pt-1 bg-[#d2d2d2] text-[#217346] border-r-2 border-r-[#217346]' : 'pb-2 bg-[#e6e6e6] border-r border-r-[#a6a6a6]'}`}>{row.n}</th>
                                {COLS.map((c) => {
                                    const ref = c + row.n;
                                    return (
                                        <td key={ref} className={`relative p-0 pb-1 whitespace-nowrap ${CELL_STYLES[ref] ?? 'border-r border-b border-[#d9d9d9]'}`}>
                                            {TEXTS[ref]}
                                            {ref === 'B3' && <Handles color="bg-[#4472c4]" />}
                                            {ref === 'C3' && <Handles color="bg-[#b8323c]" />}
                                            {ref === 'D3' && <CellEditor />}
                                        </td>
                                    );
                                })}
                            </tr>
                        ))}
                    </tbody>
                </table>
            </div>
            <div className="w-[21px] shrink-0 bg-[#e9e9e9] pl-1 pt-[2px] flex">
                <div className="w-[15px] flex flex-col bg-[#f0f0f0]">
                    <button aria-label="上へスクロール" className="h-[15px] bg-white border border-[#a6a6a6] flex items-center justify-center">
                        <svg width="8" height="4" viewBox="0 0 8 4"><path d="M0 4 L4 0 L8 4 Z" fill="#222" /></svg>
                    </button>
                    <div className="h-[154px] bg-white border border-[#a6a6a6]" />
                    <button aria-label="下へスクロール" className="mt-auto h-[15px] bg-white border border-[#a6a6a6] flex items-center justify-center">
                        <svg width="8" height="4" viewBox="0 0 8 4"><path d="M0 0 L4 4 L8 0 Z" fill="#222" /></svg>
                    </button>
                </div>
            </div>
        </div>
    );
}

function SheetTabs() {
    return (
        <div className="h-[23px] shrink-0 flex border-t border-[#a6a6a6] text-[15px] leading-none text-[#555] whitespace-nowrap">
            <div className="w-[80px] flex items-center pl-[22px] gap-[17px]">
                <button aria-label="前のシート"><svg width="4" height="6" viewBox="0 0 4 6"><path d="M4 0 V6 L0 3 Z" fill="#bbb" /></svg></button>
                <button aria-label="次のシート"><svg width="4" height="6" viewBox="0 0 4 6"><path d="M0 0 V6 L4 3 Z" fill="#bbb" /></svg></button>
            </div>
            <div className="w-px my-[3px] bg-[#999]" />
            <button className="w-[70px] pb-[5px]">Sheet1</button>
            <button className="w-[97px] h-5 pb-[2px] bg-white border-b-2 border-[#217346] text-[#217346]">Sheet1 (2)</button>
            <button className="w-[46px] pb-[5px]">活用</button>
            <div className="w-px my-[3px] bg-[#999]" />
            <button className="w-[72px] pb-[5px]">活用 (2)</button>
            <div className="w-px my-[3px] bg-[#999]" />
            <button aria-label="新しいシート" className="ml-6">
                <svg width="17" height="17" viewBox="0 0 17 17" fill="none" stroke="#bcbcbc"><circle cx="8.5" cy="8.5" r="7.5" /><path d="M4.5 8.5 H12.5 M8.5 4.5 V12.5" /></svg>
            </button>
            <div className="ml-auto w-[456px] mr-5 flex items-center gap-[11px]">
                <Grip />
                <div className="flex-1 flex h-[15px] bg-[#f2f2f2]">
                    <button aria-label="左へスクロール" className="w-4 bg-white border border-[#a6a6a6] flex items-center justify-center">
                        <svg width="4" height="8" viewBox="0 0 4 8"><path d="M4 0 V8 L0 4 Z" fill="#222" /></svg>
                    </button>
                    <div className="w-[365px] bg-white border border-[#a6a6a6]" />
                    <button aria-label="右へスクロール" className="ml-auto w-[15px] bg-white border border-[#a6a6a6] flex items-center justify-center">
                        <svg width="4" height="8" viewBox="0 0 4 8"><path d="M0 0 V8 L4 4 Z" fill="#222" /></svg>
                    </button>
                </div>
            </div>
        </div>
    );
}

function StatusBar() {
    return (
        <footer className="h-[21px] shrink-0 flex items-center bg-[#f3f3f3] border-t border-[#dadada] text-xs leading-none text-[#444] whitespace-nowrap">
            <span className="w-[80px] pl-3">編集</span>
            <button aria-label="マクロの記録">
                <svg width="13" height="13" viewBox="0 0 13 13" fill="none" stroke="#777">
                    <path d="M4 2.5 H12.5 V12.5 H1.5 V5" />
                    <path d="M3 6.5 H11 M3 8.5 H11 M3 10.5 H11" strokeDasharray="2 1" />
                    <path d="M5 2 H12.5 V4.5 H5 Z" fill="#777" stroke="none" />
                    <circle cx="2.5" cy="2.5" r="2.2" fill="#444" stroke="none" />
                </svg>
            </button>
            <button className="ml-[18px] flex items-center text-[11px] font-bold">
                <svg width="17" height="15" viewBox="0 0 17 15" fill="none" stroke="#555" strokeWidth="1.2"><path d="M6 1.5 A6 6 0 0 0 5 12.5" strokeDasharray="3 1.4" /><circle cx="9" cy="2" r="1.1" /><path d="M5.5 5 H13 M9 5 V7.5 M8 7.5 L15 14.5 M14.5 7.5 L7.5 14.5" /></svg>
                アクセシビリティ: 検討が必要です
            </button>
            <div className="ml-auto flex items-center">
                <button className="flex items-center mr-8">
                    <svg width="17" height="15" viewBox="0 0 17 15"><path d="M1 0.5 H15 V10 H1 Z" fill="#444" /><path d="M3 13.5 H9" stroke="#444" /><circle cx="12" cy="10.5" r="4.4" fill="#f3f3f3" /><circle cx="12" cy="10.5" r="2.7" fill="none" stroke="#555" strokeWidth="1.8" strokeDasharray="1.6 0.6" /></svg>
                    表示設定
                </button>
                <button aria-label="標準" className="w-10"><svg width="13" height="13" viewBox="0 0 13 13" fill="none" stroke="#777"><path d="M0.5 0.5 H12.5 V12.5 H0.5 Z M4.5 0.5 V12.5 M8.5 0.5 V12.5 M0.5 4.5 H12.5 M0.5 8.5 H12.5" /></svg></button>
                <button aria-label="ページ レイアウト表示" className="w-10"><svg width="13" height="13" viewBox="0 0 13 13" fill="none" stroke="#777"><path d="M0.5 0.5 H12.5 V12.5 H0.5 Z M3.5 2.5 H9.5 V10.5 H3.5 Z M5 4.5 H8.5 M5 6.5 H8.5 M5 8.5 H8.5" /></svg></button>
                <button aria-label="改ページ プレビュー" className="w-[30px]"><svg width="13" height="13" viewBox="0 0 13 13" fill="none" stroke="#777"><path d="M0.5 0.5 H12.5 V12.5 H0.5 Z M4.5 0.5 V8 M8.5 0.5 V8 M0.5 8.5 H8.5" /></svg></button>
                <button aria-label="縮小" className="w-4"><svg width="8" height="8" viewBox="0 0 8 8" stroke="#b8b8b8"><path d="M0 4.5 H8" /></svg></button>
                <div className="relative w-[100px] h-3 flex items-center before:absolute before:inset-x-0 before:h-px before:bg-[#666]">
                    <input aria-label="ズーム" type="range" min="0" max="100" defaultValue="50" className="relative w-full h-3 appearance-none bg-transparent [&::-webkit-slider-thumb]:appearance-none [&::-webkit-slider-thumb]:w-px [&::-webkit-slider-thumb]:h-[6px] [&::-webkit-slider-thumb]:bg-[#333]" />
                </div>
                <button aria-label="拡大" className="w-4 flex justify-center"><svg width="8" height="8" viewBox="0 0 8 8" stroke="#b8b8b8"><path d="M0 4.5 H8 M4.5 0 V8" /></svg></button>
                <span className="w-[62px] pl-[9px] text-[13px] text-[#b0b0b0]">175%</span>
            </div>
        </footer>
    );
}

export default function App() {
    return (
        <div className="h-screen bg-white px-2 pt-2 pb-[9px]">
            <div className={`${UI} h-full flex flex-col overflow-hidden rounded-lg border border-[#217346] bg-[#e6e6e6]`}>
                <div className="bg-[#217346] shrink-0">
                    <TitleBar />
                    <RibbonTabs />
                </div>
                <Ribbon />
                <FormulaBar />
                <main className="flex-1 min-h-0 flex bg-white">
                    <Sheet />
                </main>
                <SheetTabs />
                <StatusBar />
            </div>
        </div>
    );
}
